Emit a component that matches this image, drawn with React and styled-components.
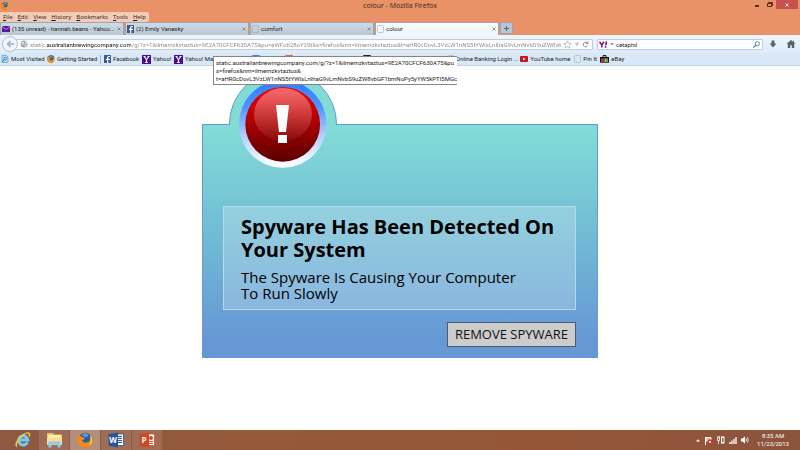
import React, { useState } from 'react';
import styled, { createGlobalStyle } from 'styled-components';

const GlobalStyle = createGlobalStyle`
  * {
    box-sizing: border-box;
  }

  body {
    margin: 0;
    background: #fff;
    font-family: "Open Sans", "Noto Sans", sans-serif;
    font-size: 6px;
    line-height: 8px;
    color: #1c1c1c;
  }

  button, input {
    font: inherit;
    color: inherit;
    border: 0;
    padding: 0;
    background: none;
  }

  a {
    color: inherit;
    text-decoration: none;
  }

  svg {
    display: block;
    flex: none;
  }
`;

const narrowFont = 'Roboto, "Open Sans", sans-serif';

// Styled components
const Screen = styled.div`
  display: flex;
  flex-direction: column;
  min-height: 100vh;
`;

const BrowserHeader = styled.header`
  background: #e99167;
`;

const TitleBar = styled.div`
  display: grid;
  grid-template-columns: 1fr auto 1fr;
  height: 12px;
`;

const TitleIcon = styled.div`
  padding: 2px 1px;
`;

const Title = styled.h1`
  margin: 0;
  font-size: 7px;
  line-height: 12px;
  font-weight: 400;
  color: #3b2a22;
`;

const WindowControls = styled.div`
  display: flex;
  justify-content: flex-end;
  padding-right: 2px;
`;

const WindowButton = styled.button`
  display: flex;
  align-items: center;
  justify-content: center;
  width: ${(props) => (props.$close ? 22 : 13)}px;
  height: 9px;
  background: ${(props) => (props.$close ? '#c9504f' : 'none')};
`;

const MenuBar = styled.nav`
  display: flex;
  gap: 5px;
  width: fit-content;
  height: 10px;
  padding: 0 3px;
  background: #f4cbb5;
  border-radius: 0 2px 2px 0;
`;

const MenuButton = styled.button`
  line-height: 9px;

  &::first-letter {
    text-decoration: underline;
  }
`;

const TabStrip = styled.div`
  display: flex;
  gap: 1px;
  height: 13px;
  font-family: ${narrowFont};
`;

const Tab = styled.div`
  display: flex;
  align-items: center;
  flex: 0 1 124px;
  min-width: 0;
  padding: 0 2px 0 1px;
  height: 13px;
  border: 1px solid #9aa5b1;
  border-bottom: 0;
  border-radius: 2px 2px 0 0;
  background: ${(props) =>
    props.$active ? 'linear-gradient(#fbfdff, #edf4fb)' : 'linear-gradient(#cfdae4, #b9c8d6)'};
`;

const TabLabel = styled.button`
  display: flex;
  align-items: center;
  gap: 2px;
  flex: 1;
  min-width: 0;
  white-space: nowrap;
`;

const TabClose = styled.button`
  color: #7d8790;
`;

const NewTab = styled.button`
  display: flex;
  align-items: center;
  justify-content: center;
  width: 13px;
  height: 12px;
  border: 1px solid #9aa5b1;
  background: #b9c6d3;
`;

const NavBar = styled.div`
  display: flex;
  align-items: center;
  height: 18px;
  padding: 0 4px 0 2px;
  background: linear-gradient(#eff6fc, #deebf8);
  font-family: ${narrowFont};
`;

const BackButton = styled.button`
  display: flex;
  align-items: center;
  justify-content: center;
  width: 16px;
  height: 16px;
  border: 1px solid #b4c3d2;
  border-radius: 50%;
  background: #eff5fb;
  z-index: 1;
`;

const Field = styled.form`
  display: flex;
  align-items: center;
  gap: 2px;
  height: 11px;
  border: 1px solid #c0cedb;
  border-radius: 1px;
  background: #fff;
`;

const UrlField = styled(Field)`
  flex: 1;
  min-width: 0;
  margin-left: -4px;
  padding: 0 3px 0 5px;
`;

const SearchField = styled(Field)`
  flex: 0 1 166px;
  margin-left: 4px;
  padding: 0 2px 0 1px;
`;

const TextInput = styled.input`
  flex: 1;
  min-width: 0;
  height: 9px;
  outline: 0;
`;

// The host name is darker than the rest of the address
const UrlInput = styled(TextInput)`
  color: transparent;
  background: linear-gradient(90deg, #888 16px, #111 16px, #111 101px, #888 101px);
  background-clip: text;
`;

const IconButton = styled.button`
  display: flex;
  align-items: center;
`;

const ToolButtons = styled.div`
  display: flex;
  gap: 9px;
  padding-left: 6px;
`;

const BookmarksBar = styled.nav`
  display: flex;
  align-items: center;
  gap: 2px;
  height: 13px;
  padding: 0 1px;
  white-space: nowrap;
  overflow: hidden;
  background: #d9e8f6;
  border-bottom: 1px solid #c4d2df;
  font-family: ${narrowFont};
`;

const Bookmark = styled.a`
  display: flex;
  align-items: center;
  gap: 2px;
  flex: none;
  min-width: ${(props) => props.$width || 0}px;
`;

const Separator = styled.span`
  width: 1px;
  height: 9px;
  margin-right: 1px;
  background: #a9b6c2;
`;

const LinkTooltip = styled.div`
  position: absolute;
  top: 56px;
  left: 213px;
  z-index: 3;
  min-width: 240px;
  padding: 2px 0 1px 2px;
  white-space: nowrap;
  border: 1px solid #858585;
  border-right: 0;
  background: #fff;
  font-family: ${narrowFont};
`;

const Content = styled.main`
  flex: 1;
  padding: 58px 16px;
`;

const AlertCard = styled.section`
  position: relative;
  display: flex;
  flex-direction: column;
  align-items: flex-end;
  gap: 12px;
  max-width: 396px;
  margin: 0 auto;
  padding: 81px 21px 10px 20px;
  border: 1px solid #6699d6;
  background: linear-gradient(#82dcd6, #73bfd5 42%, #6698d6 92%);
`;

const Badge = styled.svg`
  position: absolute;
  top: -56px;
  left: 25px;
`;

const Message = styled.div`
  width: 100%;
  padding: 8px 17px;
  border: 1px solid #b4dbe8;
  background: rgba(255, 255, 255, 0.22);
  color: #000;
`;

const Headline = styled.h2`
  margin: 0 0 8px;
  font-size: 20px;
  line-height: 23px;
`;

const Details = styled.p`
  max-width: 290px;
  margin: 0;
  font-size: 15px;
  line-height: 16px;
`;

const RemoveButton = styled.button`
  padding: 2px 7px;
  border: 1px solid #4c5c6c;
  background: #ccc;
  color: #111;
  font-size: 13px;
  line-height: 19px;
`;

const Taskbar = styled.footer`
  display: flex;
  justify-content: space-between;
  height: 20px;
  padding: 0 11px 0 8px;
  background: linear-gradient(90deg, #8e5843, #945a3a 30%, #955638 70%, #8c543c);
`;

const Apps = styled.div`
  display: flex;
  gap: 1px;
`;

const AppButton = styled.button`
  display: flex;
  align-items: center;
  justify-content: center;
  width: 30px;
  background: rgba(255, 255, 255, ${(props) => props.$shade || 0});
`;

const Tray = styled.div`
  display: flex;
  align-items: center;
  gap: 4px;
  color: #fff;
  font-family: ${narrowFont};
`;

const Clock = styled.time`
  margin-left: 4px;
  text-align: center;
`;

// Icons
const FirefoxIcon = ({ size = 8 }) => (
  <svg width={size} height={size} viewBox="0 0 16 16">
    <circle cx="8" cy="8" r="7.5" fill="#e86a17" />
    <circle cx="8.5" cy="6.3" r="5.6" fill="#235fa8" />
    <path d="M5 2.5 8 1l4 1.5L10 5 7 5z" fill="#4ba3dc" />
    <path d="M1 2 3 4.2 6 5l2 1.8-2.8 1.4C6 11 9.5 11.3 12 9.5c2-1.6 1.8-4 .8-6.5 2.6 2.2 3.4 6 1.2 9.4-3 4.3-9.5 4.1-12.2.2C-.2 9.5.3 5 1 2z" fill="#f28a1c" />
    <path d="M13 3c3.4 4 2.7 8.8-1 11 1.6-2.6 2.3-6 1-11z" fill="#fdd23a" />
  </svg>
);

const FacebookIcon = () => (
  <svg width="7" height="8" viewBox="0 0 7 8">
    <rect width="7" height="8" fill="#3b5998" />
    <path d="M4.2 8V5H6V3.8H4.2V2.6q0-.6.7-.6H6V1H4.6Q3 1 3 2.5v1.3H2V5h1v3z" fill="#fff" />
  </svg>
);

const YahooIcon = () => (
  <svg width="9" height="9" viewBox="0 0 9 9">
    <rect width="9" height="9" fill="#4b0d93" />
    <path d="M1.5 1.5h2M5.5 1.5h2M2.3 1.5l2.2 3.2 2.2-3.2M4.5 4.5v3M3.2 7.4h2.6" stroke="#fff" strokeWidth="1.1" fill="none" />
  </svg>
);

const MailIcon = () => (
  <svg width="8" height="6" viewBox="0 0 8 6">
    <rect width="8" height="6" fill="#5a1a9a" />
    <path d="m0 .5 4 3 4-3" stroke="#c9a8e8" strokeWidth=".8" fill="none" />
  </svg>
);

const BlankIcon = () => (
  <svg width="7" height="8" viewBox="0 0 7 8">
    <rect x=".5" y=".5" width="6" height="7" rx="1" fill="none" stroke="#8b949e" strokeWidth=".7" strokeDasharray="1.2 .8" />
  </svg>
);

const MostVisitedIcon = () => (
  <svg width="8" height="8" viewBox="0 0 8 8">
    <path d="M1 .5h4.5l1.5 1.5v5.5H1z" fill="#b9dcf1" stroke="#5a9bc8" strokeWidth=".7" />
    <circle cx="4.2" cy="3.6" r="1.4" fill="none" stroke="#2877b3" strokeWidth=".8" />
    <path d="M3.2 4.8 1.2 7" stroke="#2877b3" />
  </svg>
);

const YouTubeIcon = () => (
  <svg width="8" height="6" viewBox="0 0 8 6">
    <rect width="8" height="6" rx="1" fill="#c4161c" />
    <path d="m3 1.5 2.6 1.5L3 4.5z" fill="#fff" />
  </svg>
);

const EbayIcon = () => (
  <svg width="9" height="8" viewBox="0 0 9 8">
    <path d="M3 2.4V.6h3v1.8" fill="none" stroke="#111" />
    <path d="M0 2h9v5.7H0z" fill="#151515" />
    <path d="M1 3.5h2V7H1z" fill="#d22" />
    <path d="M3 3.5h1.8V7H3z" fill="#2b65c9" />
    <path d="M4.8 3.5h1.6V7H4.8z" fill="#f2bd1c" />
    <path d="M6.4 3.5H8V7H6.4z" fill="#6cb32c" />
  </svg>
);

const SquareIcon = ({ color }) => (
  <svg width="8" height="8" viewBox="0 0 8 8">
    <rect width="8" height="8" rx="1" fill={color} />
  </svg>
);

const GlobeIcon = () => (
  <svg width="8" height="8" viewBox="0 0 8 8">
    <circle cx="4" cy="4" r="3.5" fill="#a2a7ac" />
    <path d="M1 2.5h3l-1 2-1.5-.3M5 1l2 2-2 .6M4.5 5.5l1.5-.6-.8 1.8" stroke="#eef1f4" strokeWidth=".8" fill="none" />
  </svg>
);

const CloseIcon = ({ size = 4, color = 'currentColor' }) => (
  <svg width={size} height={size} viewBox="0 0 4 4">
    <path d="m.5.5 3 3m0-3-3 3" stroke={color} strokeWidth=".9" />
  </svg>
);

const IeIcon = () => (
  <svg width="16" height="16" viewBox="0 0 16 16">
    <path d="M12.4 10.4A4.6 4.6 0 1 1 12.8 8H4.5" fill="none" stroke="#6fcdf7" strokeWidth="3" />
    <path d="M2 14.5C-.8 12.5 4 5.2 9 2.3c4.7-2.8 6.6-1 5 2" fill="none" stroke="#f5cb35" strokeWidth="1.5" />
  </svg>
);

const ExplorerIcon = () => (
  <svg width="17" height="16" viewBox="0 0 17 16">
    <path d="M1 1h6l1 1.5h8V13H1z" fill="#e9c66a" />
    <path d="M2 3h13v8H2z" fill="#fbeeb0" />
    <path d="M1 5.5h15V13H1z" fill="#f6df8e" />
    <path d="M2.5 15.5V9.5h12v6h-3v-3h-6v3z" fill="#8ccbea" />
  </svg>
);

const OfficeIcon = ({ color, letter, children }) => (
  <svg width="16" height="16" viewBox="0 0 16 16">
    <path d="M8 2h7.5v11.5H8z" fill="#fff" stroke={color} strokeWidth=".8" />
    {children}
    <path d="M.5 2.2 10 .5v15L.5 13.8z" fill={color} />
    <text x="5.1" y="11" fontSize="8" fontWeight="700" textAnchor="middle" fill="#fff">{letter}</text>
  </svg>
);

const WarningBadge = () => (
  <Badge width="110" height="110" viewBox="0 0 110 110" aria-hidden="true">
    <defs>
      <linearGradient id="ring" x1="0" y1="0" x2="0" y2="1">
        <stop offset="0" stopColor="#2f7dff" />
        <stop offset=".3" stopColor="#4f92ff" />
        <stop offset=".6" stopColor="#a9c8fb" />
        <stop offset=".9" stopColor="#eef5ff" />
        <stop offset="1" stopColor="#fff" />
      </linearGradient>
      <linearGradient id="ball" x1="0" y1="0" x2="0" y2="1">
        <stop offset="0" stopColor="#f40000" />
        <stop offset=".4" stopColor="#b80000" />
        <stop offset=".75" stopColor="#800000" />
        <stop offset="1" stopColor="#5c0000" />
      </linearGradient>
      <linearGradient id="gloss" x1="0" y1="0" x2="0" y2="1">
        <stop offset="0" stopColor="#fff" stopOpacity=".42" />
        <stop offset="1" stopColor="#fff" stopOpacity=".03" />
      </linearGradient>
    </defs>
    <path d="M1.5 56.5V55a53.5 53.5 0 0 1 107 0v1.5z" fill="#82dcd6" />
    <path d="M1.5 56V55a53.5 53.5 0 0 1 107 0v1" fill="none" stroke="#6699d6" />
    <circle cx="54.7" cy="55" r="43.8" fill="url(#ring)" />
    <circle cx="54.7" cy="55.3" r="37.4" fill="url(#ball)" />
    <ellipse cx="55" cy="45.5" rx="29" ry="26.5" fill="url(#gloss)" />
    <path d="M48 36h13l-3 27h-7z" fill="#fff" />
    <path d="M50 66h9v8h-9z" fill="#fff" />
  </Badge>
);

const url =
  'static.australianbrewingcompany.com/g/?z=1&ilmemzkvtaztus=9E2A70CFCF630A75&pu=eWFob28uY29t&s=firefox&nm=ilmemzkvtaztus&t=aHR0cDovL3VzLW1nNS5tYWlsLnlhaG9vLmNvbS9uZW8vbGF1bmNoPy5yYW5kPTI5MGc';

const menus = ['File', 'Edit', 'View', 'History', 'Bookmarks', 'Tools', 'Help'];

const tabs = [
  { title: '(135 unread) - hannah.beans - Yahoo...', icon: <MailIcon /> },
  { title: '(2) Emily Vanesky', icon: <FacebookIcon /> },
  { title: 'comfort', icon: <BlankIcon /> },
  { title: 'colour', icon: <BlankIcon /> },
];

const bookmarks = [
  { label: 'Most Visited', icon: <MostVisitedIcon />, width: 44 },
  { label: 'Getting Started', icon: <FirefoxIcon />, width: 51, separator: true },
  { label: 'Facebook', icon: <FacebookIcon />, width: 36 },
  { label: 'Yahoo!', icon: <YahooIcon />, width: 30 },
  { label: 'Yahoo! Ma', icon: <YahooIcon />, width: 76 },
  { icon: <SquareIcon color="#3f7fe0" />, width: 31 },
  { icon: <SquareIcon color="#e2603a" />, width: 76 },
  { icon: <SquareIcon color="#222" />, width: 82 },
  { label: 'Online Banking Login ...', icon: <BlankIcon />, width: 71 },
  { label: 'YouTube home', icon: <YouTubeIcon />, width: 52 },
  { label: 'Pin It', icon: <BlankIcon />, width: 24 },
  { label: 'eBay', icon: <EbayIcon /> },
];

const Header = () => {
  const [activeTab, setActiveTab] = useState(3);
  const [address, setAddress] = useState(url);
  const [search, setSearch] = useState('cetaphil');

  const handleSubmit = (e) => {
    e.preventDefault();
  };

  return (
    <BrowserHeader>
      <TitleBar>
        <TitleIcon><FirefoxIcon /></TitleIcon>
        <Title>colour - Mozilla Firefox</Title>
        <WindowControls>
          <WindowButton aria-label="Minimize">
            <svg width="4" height="5"><path d="M0 4h4" stroke="#4b3026" strokeWidth="2" /></svg>
          </WindowButton>
          <WindowButton aria-label="Restore">
            <svg width="6" height="5"><path d="M.5 1.5h4v3h-4zM1.5 1.5v-1h4v3h-1" stroke="#4b3026" fill="none" /></svg>
          </WindowButton>
          <WindowButton $close aria-label="Close"><CloseIcon color="#fff" /></WindowButton>
        </WindowControls>
      </TitleBar>
      <MenuBar>
        {menus.map((menu) => (
          <MenuButton key={menu}>{menu}</MenuButton>
        ))}
      </MenuBar>
      <TabStrip>
        {tabs.map((tab, index) => (
          <Tab key={tab.title} $active={index === activeTab}>
            <TabLabel onClick={() => setActiveTab(index)}>{tab.icon}{tab.title}</TabLabel>
            <TabClose aria-label={`Close ${tab.title}`}><CloseIcon /></TabClose>
          </Tab>
        ))}
        <NewTab aria-label="New tab">
          <svg width="5" height="5"><path d="M2.5 0v5M0 2.5h5" stroke="#56616c" /></svg>
        </NewTab>
      </TabStrip>
      <NavBar>
        <BackButton aria-label="Back">
          <svg width="8" height="8"><path d="M8 4H1.5M4.5 1l-3 3 3 3" stroke="#a3b0bd" strokeWidth="1.6" fill="none" /></svg>
        </BackButton>
        <UrlField onSubmit={handleSubmit}>
          <GlobeIcon />
          <UrlInput aria-label="Address" value={address} onChange={(e) => setAddress(e.target.value)} />
          <IconButton type="button" aria-label="Bookmark this page">
            <svg width="9" height="9" viewBox="0 0 9 9"><path d="m4.5.8 1.1 2.5 2.7.3-2 1.8.6 2.7-2.4-1.4-2.4 1.4.6-2.7-2-1.8 2.7-.3z" fill="#fff" stroke="#a4acb4" strokeWidth=".7" /></svg>
          </IconButton>
          <IconButton type="button" aria-label="History">
            <svg width="6" height="5"><path d="M.5.5h5L3 4.5z" fill="#c4cad0" /></svg>
          </IconButton>
          <IconButton type="button" aria-label="Reload">
            <svg width="7" height="7"><path d="M5.5 2A2.4 2.4 0 1 0 5.8 4.5M6 .3v2.2H3.6" stroke="#8695a4" fill="none" /></svg>
          </IconButton>
        </UrlField>
        <SearchField onSubmit={handleSubmit}>
          <svg width="9" height="7" viewBox="0 0 9 7">
            <path d="m.5.8 2.3 3 2.2-3M2.8 3.8v2.7M7.4.3l-.5 4" stroke="#7b1fa2" strokeWidth="1.7" fill="none" />
            <circle cx="6.6" cy="6" r=".9" fill="#7b1fa2" />
          </svg>
          <svg width="4" height="3"><path d="M0 0h4L2 2.5z" fill="#8d949b" /></svg>
          <TextInput aria-label="Search" value={search} onChange={(e) => setSearch(e.target.value)} />
          <IconButton aria-label="Search the web">
            <svg width="7" height="7"><circle cx="4.3" cy="2.7" r="2.1" fill="none" stroke="#4d88bd" /><path d="m2.8 4.2-2.4 2.4" stroke="#4d88bd" strokeWidth="1.3" /></svg>
          </IconButton>
        </SearchField>
        <ToolButtons>
          <IconButton aria-label="Downloads">
            <svg width="8" height="8"><path d="M2.5.5h3v3h2L4 7.5.5 3.5h2z" fill="#56626e" /></svg>
          </IconButton>
          <IconButton aria-label="Home">
            <svg width="10" height="8"><path d="M5 0 .5 4h1.3v4h2.4V5.2h1.6V8h2.4V4h1.3L8 2.6V.8H7v1z" fill="#56626e" /></svg>
          </IconButton>
        </ToolButtons>
      </NavBar>
      <BookmarksBar>
        {bookmarks.map((bookmark, index) => (
          <React.Fragment key={index}>
            <Bookmark href="#" $width={bookmark.width} aria-label={bookmark.label || 'Bookmark'}>
              {bookmark.icon}
              {bookmark.label}
            </Bookmark>
            {bookmark.separator && <Separator />}
          </React.Fragment>
        ))}
      </BookmarksBar>
    </BrowserHeader>
  );
};

const SpywareAlert = () => {
  return (
    <AlertCard>
      <WarningBadge />
      <Message>
        <Headline>Spyware Has Been Detected On Your System</Headline>
        <Details>The Spyware Is Causing Your Computer To Run Slowly</Details>
      </Message>
      <RemoveButton>REMOVE SPYWARE</RemoveButton>
    </AlertCard>
  );
};

const SystemTaskbar = () => {
  return (
    <Taskbar>
      <Apps>
        <AppButton aria-label="Internet Explorer"><IeIcon /></AppButton>
        <AppButton $shade={0.12} aria-label="File Explorer"><ExplorerIcon /></AppButton>
        <AppButton $shade={0.32} aria-label="Firefox"><FirefoxIcon size={16} /></AppButton>
        <AppButton $shade={0.12} aria-label="Word">
          <OfficeIcon color="#2a5699" letter="W">
            <path d="M10 4.5h4M10 6.5h4M10 8.5h4M10 10.5h4" stroke="#2a5699" />
          </OfficeIcon>
        </AppButton>
        <AppButton $shade={0.12} aria-label="PowerPoint">
          <OfficeIcon color="#d24625" letter="P">
            <circle cx="12" cy="6" r="2" fill="#d24625" />
            <path d="M10 9.5h4M10 11.5h4" stroke="#d24625" />
          </OfficeIcon>
        </AppButton>
      </Apps>
      <Tray>
        <svg width="4" height="3"><path d="M0 2.5h4L2 .3z" fill="#fff" /></svg>
        <svg width="9" height="9" viewBox="0 0 9 9">
          <path d="M1.5 1v8M2 1.5h5v3.5H2" stroke="#fff" fill="#d8c8c0" />
          <circle cx="6" cy="6" r="2.7" fill="#d8342b" />
          <path d="m5 5 2 2m0-2L5 7" stroke="#fff" strokeWidth=".8" />
        </svg>
        <svg width="8" height="8" viewBox="0 0 8 8">
          <path d="M.5 1.5h2v3h-2zM1.5 4.5V8M1 0v1.5M2.3 0v1.5" stroke="#fff" fill="none" strokeWidth=".8" />
          <path d="M4 .5h3.5v7H4z" fill="#fff" />
          <path d="M5 2h1.5v4H5z" fill="#8f5a42" />
        </svg>
        <svg width="8" height="8" viewBox="0 0 8 8">
          <path d="M1 8V6M3 8V4.5M5 8V3M7 8V1" stroke="#fff" strokeWidth="1.3" />
        </svg>
        <svg width="8" height="8" viewBox="0 0 8 8">
          <path d="M0 2.5h1.5L4 .5v7l-2.5-2H0z" fill="#fff" />
          <path d="M5 2.5q1 1.5 0 3M6.3 1.3q2 2.7 0 5.4" stroke="#fff" fill="none" strokeWidth=".8" />
        </svg>
        <Clock>8:35 AM<br />11/23/2013</Clock>
      </Tray>
    </Taskbar>
  );
};

const App = () => {
  return (
    <Screen>
      <GlobalStyle />
      <Header />
      <LinkTooltip role="tooltip">
        static.australianbrewingcompany.com/g/?z=1&amp;ilmemzkvtaztus=9E2A70CFCF630A75&amp;pu<br />
        s=firefox&amp;nm=ilmemzkvtaztus&amp;<br />
        t=aHR0cDovL3VzLW1nNS5tYWlsLnlhaG9vLmNvbS9uZW8vbGF1bmNoPy5yYW5kPTI5MGc
      </LinkTooltip>
      <Content>
        <SpywareAlert />
      </Content>
      <SystemTaskbar />
    </Screen>
  );
};

export default App;
